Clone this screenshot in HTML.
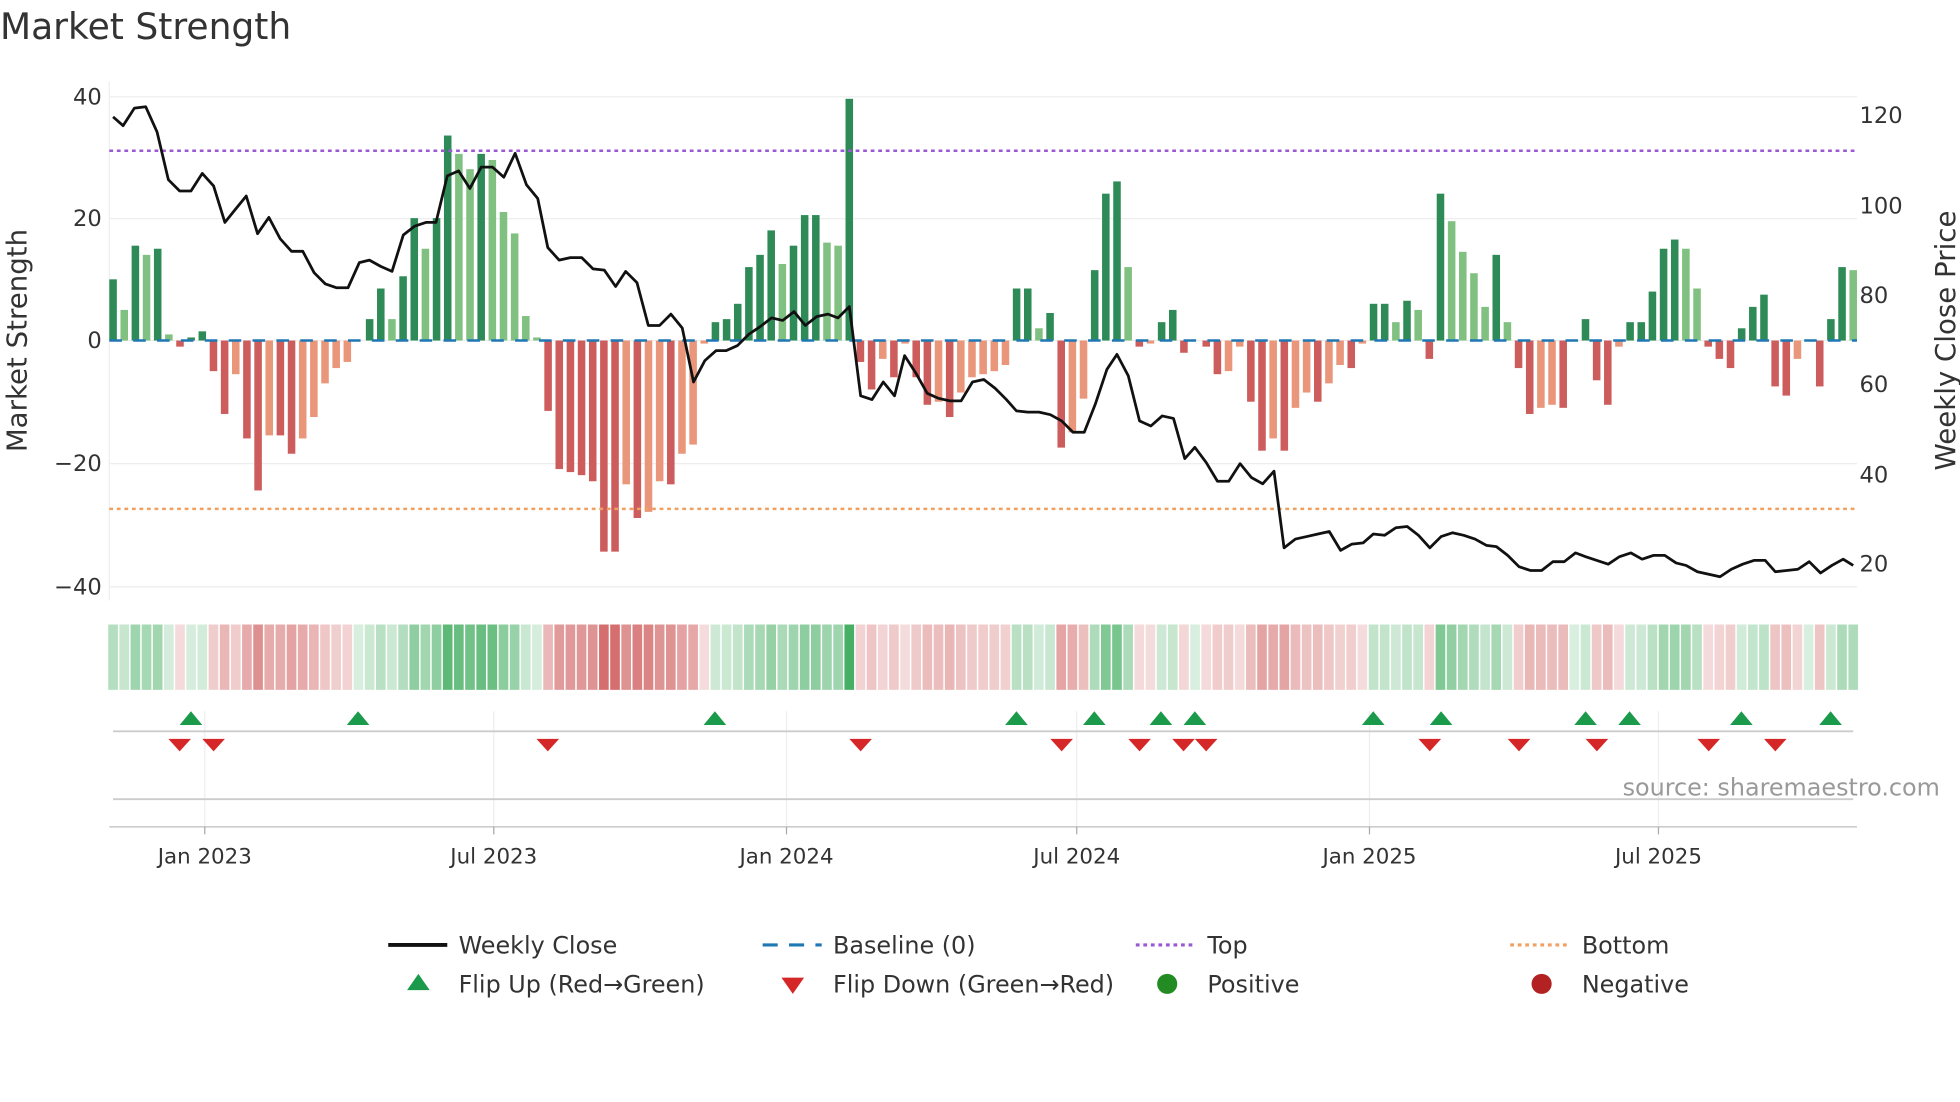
<!DOCTYPE html>
<html><head><meta charset="utf-8"><style>
html,body{margin:0;padding:0;background:#fff;width:1960px;height:1102px;overflow:hidden}
svg{display:block}
text{font-family:"DejaVu Sans","Liberation Sans",sans-serif;fill:#333}
</style></head><body>
<svg id="s" width="1960" height="1102" viewBox="0 0 1560 877" preserveAspectRatio="none" xmlns="http://www.w3.org/2000/svg">
<text x="0" y="31" font-size="28.7">Market Strength</text>
<g id="grid"></g>
<g id="bars"></g>
<g id="heat"></g>
<g id="ov"></g>
<text x="81" y="83" font-size="18" text-anchor="end">40</text>
<text x="81" y="180" font-size="18" text-anchor="end">20</text>
<text x="81" y="277" font-size="18" text-anchor="end">0</text>
<text x="81" y="375" font-size="18" text-anchor="end">−20</text>
<text x="81" y="473" font-size="18" text-anchor="end">−40</text>
<text x="1480" y="98" font-size="18">120</text>
<text x="1480" y="170" font-size="18">100</text>
<text x="1480" y="241" font-size="18">80</text>
<text x="1480" y="312" font-size="18">60</text>
<text x="1480" y="384" font-size="18">40</text>
<text x="1480" y="455" font-size="18">20</text>
<text transform="translate(21,271) rotate(-90)" font-size="22" text-anchor="middle">Market Strength</text>
<text transform="translate(1556,271) rotate(-90)" font-size="22" text-anchor="middle">Weekly Close Price</text>
<text x="1544" y="633" font-size="19" text-anchor="end" style="fill:#999">source: sharemaestro.com</text>
<g font-size="17" text-anchor="middle">
<text x="163" y="687">Jan 2023</text><text x="393" y="687">Jul 2023</text><text x="626" y="687">Jan 2024</text>
<text x="857" y="687">Jul 2024</text><text x="1090" y="687">Jan 2025</text><text x="1320" y="687">Jul 2025</text>
</g>
<g font-size="19">
<line x1="309" y1="752" x2="356" y2="752" stroke="#111" stroke-width="3"/><text x="365" y="759">Weekly Close</text>
<line x1="607" y1="752" x2="654" y2="752" stroke="#1f77b4" stroke-width="2.5" stroke-dasharray="12,9"/><text x="663" y="759">Baseline (0)</text>
<line x1="904" y1="752" x2="950" y2="752" stroke="#9b59d6" stroke-width="2.5" stroke-dasharray="3,3"/><text x="961" y="759">Top</text>
<line x1="1202" y1="752" x2="1248" y2="752" stroke="#f0a060" stroke-width="2.5" stroke-dasharray="3,3"/><text x="1259" y="759">Bottom</text>
<polygon points="333,775 324,788 342,788" fill="#1a9a4a"/><text x="365" y="790">Flip Up (Red→Green)</text>
<polygon points="622,778 640,778 631,791" fill="#d62728"/><text x="663" y="790">Flip Down (Green→Red)</text>
<circle cx="929" cy="783" r="8" fill="#228b22"/><text x="961" y="790">Positive</text>
<circle cx="1227" cy="783" r="8" fill="#b22222"/><text x="1259" y="790">Negative</text>
</g>
</svg>
<script>
var NS="http://www.w3.org/2000/svg";
function el(p,t,a){var e=document.createElementNS(NS,t);for(var k in a)e.setAttribute(k,a[k]);document.getElementById(p).appendChild(e);return e;}
var v=[10,5,15.5,14,15,1,-1,0.5,1.5,-5,-12,-5.5,-16,-24.5,-15.5,-15.5,-18.5,-16,-12.5,-7,-4.5,-3.5,0,3.5,8.5,3.5,10.5,20,15,20,33.5,30.5,28,30.5,29.5,21,17.5,4,0.5,-11.5,-21,-21.5,-22,-23,-34.5,-34.5,-23.5,-29,-28,-23,-23.5,-18.5,-17,-0.5,3,3.5,6,12,14,18,12.5,15.5,20.5,20.5,16,15.5,39.5,-3.5,-8,-3,-6,-0.5,-6,-10.5,-10,-12.5,-8.5,-6,-5.5,-5,-4,8.5,8.5,2,4.5,-17.5,-15,-9.5,11.5,24,26,12,-1,-0.5,3,5,-2,0,-1,-5.5,-5,-1,-10,-18,-16,-18,-11,-8.5,-10,-7,-4,-4.5,-0.5,6,6,3,6.5,5,-3,24,19.5,14.5,11,5.5,14,3,-4.5,-12,-11,-10.5,-11,0,3.5,-6.5,-10.5,-1,3,3,8,15,16.5,15,8.5,-1,-3,-4.5,2,5.5,7.5,-7.5,-9,-3,0,-7.5,3.5,12,11.5];
var n=v.length,x0=90,dx=(1475-90)/(n-1);
[77,174,271,369,467].forEach(function(y){el("grid","line",{x1:87,x2:1478,y1:y,y2:y,stroke:"#eee","stroke-width":1});});
el("grid","line",{x1:87,x2:87,y1:65,y2:478,stroke:"#eee"});
[163,393,626,857,1090,1320].forEach(function(x){el("grid","line",{x1:x,x2:x,y1:566,y2:660,stroke:"#eee"});});
el("grid","line",{x1:90,x2:1475,y1:582,y2:582,stroke:"#ccc","stroke-width":1.5});
el("grid","line",{x1:90,x2:1475,y1:636,y2:636,stroke:"#ccc","stroke-width":1.5});
el("grid","line",{x1:87,x2:1478,y1:658,y2:658,stroke:"#ccc","stroke-width":1.2});
[163,393,626,857,1090,1320].forEach(function(x){el("grid","line",{x1:x,x2:x,y1:658,y2:664,stroke:"#aaa"});});
for(var i=0;i<n;i++){var x=x0+i*dx,val=v[i],h=Math.abs(val)*4.87,prev=i?v[i-1]:0;
 var dark=Math.abs(val)>=Math.abs(prev)||(val*prev<0);
 var c=val>=0?(dark?"#2e8b57":"#80c080"):(dark?"#cd5c5c":"#e9967a");
 if(h>0.3)el("bars","rect",{x:x-3,width:6,y:val>=0?271-h:271,height:h,fill:c});
 var a=Math.min(1,Math.abs(val)/40)*0.75+0.2;
 var hc=val>=0?"rgba(60,170,90,"+a+")":"rgba(205,85,85,"+a+")";
 el("heat","rect",{x:x-4.45+0.6,width:dx-1.2,y:497,height:52,fill:hc});
}
el("ov","line",{x1:87,x2:1478,y1:271,y2:271,stroke:"#1f77b4","stroke-width":2,"stroke-dasharray":"10,9"});
el("ov","line",{x1:87,x2:1478,y1:120,y2:120,stroke:"#9b59d6","stroke-width":2,"stroke-dasharray":"3,3"});
el("ov","line",{x1:87,x2:1478,y1:405,y2:405,stroke:"#f0a060","stroke-width":2,"stroke-dasharray":"3,3"});
var p="90,93 98,100 107,86 116,85 125,105 134,143 143,152 152,152 161,138 170,148 179,177 187,167 196,156 205,186 214,173 223,190 232,200 241,200 250,217 259,226 268,229 277,229 286,209 294,207 303,212 312,216 321,187 330,180 339,177 347,177 356,140 365,136 374,150 383,133 392,133 401,141 410,122 419,147 428,158 436,197 445,207 454,205 463,205 472,214 481,215 490,228 498,216 507,225 516,259 525,259 534,250 543,261 552,304 561,287 570,279 578,279 587,275 596,266 605,260 614,253 623,255 632,248 641,259 650,252 659,250 667,253 676,244 685,315 694,318 703,304 712,315 720,283 729,297 738,313 747,317 756,319 765,319 774,304 783,302 792,309 801,318 809,327 818,328 827,328 836,330 845,335 854,344 863,344 872,321 881,294 889,282 898,299 907,335 916,339 925,331 934,333 943,365 951,356 960,368 969,383 978,383 987,369 996,380 1005,385 1014,375 1022,436 1031,429 1040,427 1049,425 1058,423 1067,438 1076,433 1085,432 1093,425 1102,426 1111,420 1120,419 1129,426 1138,436 1147,427 1156,424 1165,426 1174,429 1183,434 1191,435 1200,442 1209,451 1218,454 1227,454 1236,447 1245,447 1254,440 1262,443 1271,446 1280,449 1289,443 1298,440 1307,445 1316,442 1325,442 1334,448 1342,450 1351,455 1360,457 1369,459 1378,453 1387,449 1396,446 1405,446 1413,455 1422,454 1431,453 1440,447 1449,456 1458,450 1467,445 1475,450";
el("ov","polyline",{points:p,fill:"none",stroke:"#111","stroke-width":2.2,"stroke-linejoin":"round"});
[152,285,569,809,871,924,951,1093,1147,1262,1297,1386,1457].forEach(function(x){el("ov","polygon",{points:(x)+",566 "+(x-9)+",577 "+(x+9)+",577",fill:"#1a9a4a"});});
[143,170,436,685,845,907,942,960,1138,1209,1271,1360,1413].forEach(function(x){el("ov","polygon",{points:(x-9)+",588 "+(x+9)+",588 "+x+",598",fill:"#d62728"});});
</script>
</body></html>
